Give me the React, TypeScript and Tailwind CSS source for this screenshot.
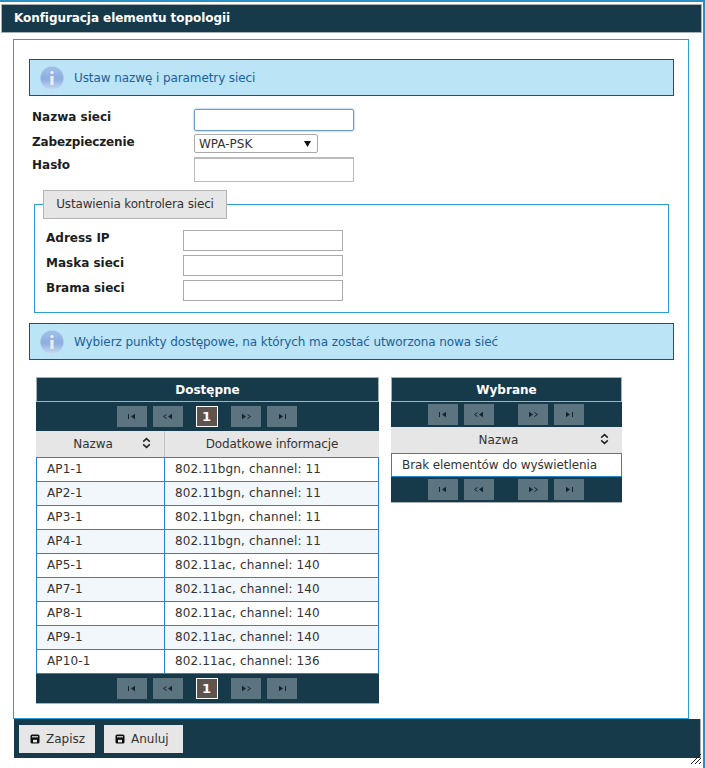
import React from "react";

const F = "font-['DejaVu_Sans',Verdana,sans-serif]";

function InfoIcon({ id }: { id: string }) {
  return (
    <svg width="24" height="24" viewBox="0 0 24 24" className="shrink-0">
      <defs>
        <linearGradient id={id} x1="0" y1="0" x2="0" y2="1">
          <stop offset="0" stopColor="#a3bfe6" />
          <stop offset="0.55" stopColor="#8dade0" />
          <stop offset="1" stopColor="#c6d9f0" />
        </linearGradient>
      </defs>
      <circle cx="12" cy="12" r="11.5" fill={`url(#${id})`} />
      <circle cx="12" cy="6.5" r="1.7" fill="#e6eff9" />
      <rect x="10.4" y="10" width="3.2" height="9" fill="#e6eff9" />
    </svg>
  );
}

function Alert({ id, text }: { id: string; text: string }) {
  return (
    <div className="h-[37px] border border-[#1b4f80] bg-[#bbe4f7] flex items-center pl-[10px] gap-[10px] text-[#1d5f9a] text-[12px] tracking-[-0.09px]">
      <InfoIcon id={id} />
      <span>{text}</span>
    </div>
  );
}

function PageGlyph({ kind }: { kind: "first" | "prev" | "next" | "last" }) {
  const c = "#14242c";
  return (
    <svg width="12" height="7" viewBox="0 0 12 7">
      {kind === "first" && (
        <>
          <rect x="2" y="1" width="1" height="5" fill={c} />
          <path d="M9 0.8v5.4L5 3.5z" fill={c} />
        </>
      )}
      {kind === "prev" && (
        <>
          <path d="M4.5 1.5 1.5 3.5 4.5 5.5" fill="none" stroke={c} strokeWidth="1" />
          <path d="M10 0.8v5.4L6 3.5z" fill={c} />
        </>
      )}
      {kind === "next" && (
        <>
          <path d="M2 0.8v5.4L6 3.5z" fill={c} />
          <path d="M7.5 1.5 10.5 3.5 7.5 5.5" fill="none" stroke={c} strokeWidth="1" />
        </>
      )}
      {kind === "last" && (
        <>
          <path d="M3 0.8v5.4L7 3.5z" fill={c} />
          <rect x="9" y="1" width="1" height="5" fill={c} />
        </>
      )}
    </svg>
  );
}

function PageBtn({ kind }: { kind: "first" | "prev" | "next" | "last" }) {
  return (
    <span className="w-[30px] h-[21px] bg-[#5b7480] flex items-center justify-center">
      <PageGlyph kind={kind} />
    </span>
  );
}

function Pager({ current, cls }: { current?: boolean; cls: string }) {
  return (
    <div className={`flex items-center justify-center bg-[#173a4b] pr-[2px] ${cls}`}>
      <div className="flex items-center">
        <PageBtn kind="first" />
        <span className="w-[6px]" />
        <PageBtn kind="prev" />
        {current ? (
          <span className="mx-[13px] w-[22px] h-[21px] bg-[#5d5450] border border-white text-white text-[13px] font-bold flex items-center justify-center">1</span>
        ) : (
          <span className="w-[24px]" />
        )}
        <PageBtn kind="next" />
        <span className="w-[6px]" />
        <PageBtn kind="last" />
      </div>
    </div>
  );
}

function Sort() {
  return (
    <svg width="9" height="12" viewBox="0 0 9 12" fill="none" stroke="#222" strokeWidth="1.5">
      <path d="M1.2 4.6 4.5 1.6 7.8 4.6" />
      <path d="M1.2 7.4 4.5 10.4 7.8 7.4" />
    </svg>
  );
}

function Save() {
  return (
    <svg width="10" height="10" viewBox="0 0 10 10">
      <rect x="0.5" y="0.5" width="9" height="9" rx="1.5" fill="#0d0d0d" />
      <rect x="2" y="2.2" width="6" height="1.2" fill="#e6e6e6" />
      <rect x="3" y="5.8" width="4" height="2.6" fill="#e6e6e6" />
    </svg>
  );
}

const rows: [string, string][] = [
  ["AP1-1", "802.11bgn, channel: 11"],
  ["AP2-1", "802.11bgn, channel: 11"],
  ["AP3-1", "802.11bgn, channel: 11"],
  ["AP4-1", "802.11bgn, channel: 11"],
  ["AP5-1", "802.11ac, channel: 140"],
  ["AP7-1", "802.11ac, channel: 140"],
  ["AP8-1", "802.11ac, channel: 140"],
  ["AP9-1", "802.11ac, channel: 140"],
  ["AP10-1", "802.11ac, channel: 136"],
];

const inputCls = "block bg-white border border-[#aaaaaa]";

export default function App() {
  return (
    <div className={`${F} relative w-[705px] h-[768px] bg-white text-[12px] text-[#222] overflow-hidden border-t-2 border-r-2 border-[#2a8fc4] pr-[1px]`}>
      <div className="pt-[2px] pl-[1px]">
        <div className="h-[29px] bg-[#173a4b] border border-[#a8b0b4] flex items-center pl-[12px] text-white font-bold text-[12px] tracking-[-0.06px] pb-[2px]">
          Konfiguracja elementu topologii
        </div>
      </div>

      <div className="ml-[13px] mr-[13px] mt-[6px] h-[680px] border border-[#2a9fd6] pl-[15px] pr-[14px] pt-[19px]">
        <Alert id="i1" text="Ustaw nazwę i parametry sieci" />

        <div className="mt-[13px] ml-[3px] grid grid-cols-[162px_1fr] text-[12px] font-bold text-[#1d1d1d]">
          <div className="h-[25px] leading-[16px]">Nazwa sieci</div>
          <div className="h-[25px]">
            <div className="w-[160px] h-[22px] border border-[#6b9dc8] rounded-[2px] shadow-[0_0_2px_#5b9dd9]" />
          </div>
          <div className="h-[23px] leading-[16px] tracking-[-0.14px]">Zabezpieczenie</div>
          <div className="h-[23px]">
            <div className="w-[124px] h-[19px] border border-[#aaaaaa] rounded-[2px] flex items-center justify-between pl-[4px] pr-[6px] font-normal text-[12px] tracking-normal text-[#333]">
              <span>WPA-PSK</span>
              <svg width="7" height="6" viewBox="0 0 7 6"><path d="M0 0h7L3.5 6z" fill="#111" /></svg>
            </div>
          </div>
          <div className="h-[24px] leading-[16px]">Hasło</div>
          <div className="h-[24px]">
            <div className={`${inputCls} w-[160px] h-[25px] border-[#bbbbbb] border-t-2`} />
          </div>
        </div>

        <div className="relative mt-[23px] ml-[5px] mr-[5px] h-[109px] border border-[#2a9fd6] pl-[11px] pt-[25px]">
          <div className="absolute left-[8px] top-[-15px] w-[184px] h-[29px] bg-[#e6e6e6] border border-[#b4b4b4] flex items-center justify-center text-[12px] tracking-[-0.15px] text-[#333] pb-[2px]">
            Ustawienia kontrolera sieci
          </div>
          <div className="grid grid-cols-[137px_160px] grid-rows-[25px_25px_25px] text-[12px] font-bold text-[#1d1d1d]">
            {["Adress IP", "Maska sieci", "Brama sieci"].map((l) => (
              <React.Fragment key={l}>
                <div className="leading-[16px]">{l}</div>
                <div className={`${inputCls} h-[21px]`} />
              </React.Fragment>
            ))}
          </div>
        </div>

        <div className="mt-[10px]">
          <Alert id="i2" text="Wybierz punkty dostępowe, na których ma zostać utworzona nowa sieć" />
        </div>

        <div className="mt-[17px] ml-[7px] flex items-start gap-[12px]">
          <div className="w-[343px]">
            <div className="h-[25px] bg-[#173a4b] border border-[#a8b0b4] flex items-center justify-center text-white font-bold text-[12px]">Dostępne</div>
            <Pager current cls="h-[29px]" />
            <div className="grid grid-cols-[129px_1fr] h-[26px] bg-[#e6e6e6] text-[12px] tracking-[-0.1px] text-[#333]">
              <div className="relative flex items-center justify-center border-r border-[#c4c4c4] pr-[14px]">
                Nazwa
                <span className="absolute right-[13px] top-[6px]"><Sort /></span>
              </div>
              <div className="flex items-center justify-center">Dodatkowe informacje</div>
            </div>
            <div className="border border-b-0 border-[#1f8ac8]">
              {rows.map(([a, b], i) => (
                <div key={a} className={`grid grid-cols-[128px_1fr] h-[24px] border-b border-[#1f8ac8] ${i % 2 ? "bg-[#f2f7fb]" : "bg-white"} text-[#333] tracking-[0.14px]`}>
                  <div className="border-r border-[#1f8ac8] pl-[10px] leading-[22px]">{a}</div>
                  <div className="pl-[10px] leading-[22px]">{b}</div>
                </div>
              ))}
            </div>
            <Pager current cls="h-[30px] border-b border-[#a8b0b4]" />
          </div>

          <div className="w-[231px]">
            <div className="h-[25px] bg-[#173a4b] border border-[#a8b0b4] flex items-center justify-center text-white font-bold text-[12px]">Wybrane</div>
            <Pager cls="h-[25px]" />
            <div className="relative h-[26px] bg-[#e6e6e6] flex items-center justify-center text-[#333] pr-[16px]">
              Nazwa
              <span className="absolute right-[13px] top-[6px]"><Sort /></span>
            </div>
            <div className="h-[24px] border border-[#1f8ac8] pl-[10px] leading-[22px] text-[#333] tracking-[-0.1px]">Brak elementów do wyświetlenia</div>
            <Pager cls="h-[26px] border-b border-[#a8b0b4]" />
          </div>
        </div>
      </div>

      <div className="ml-[14px] mr-[1px] h-[39px] bg-[#173a4b] border-r border-[#a8b0b4] flex items-center pl-[5px] gap-[9px]">
        <div className="w-[76px] h-[28px] bg-[#e6e6e6] flex items-center pl-[11px] gap-[6px] text-[#333]">
          <Save /> Zapisz
        </div>
        <div className="w-[79px] h-[28px] bg-[#e6e6e6] flex items-center pl-[11px] gap-[6px] text-[#333]">
          <Save /> Anuluj
        </div>
      </div>
      <svg className="absolute right-[1px] bottom-[3px]" width="12" height="12" viewBox="0 0 12 12" stroke="#222" strokeWidth="1" fill="none">
        <path d="M1 11 11 1M5 11 11 5M9 11 11 9" />
      </svg>
    </div>
  );
}
